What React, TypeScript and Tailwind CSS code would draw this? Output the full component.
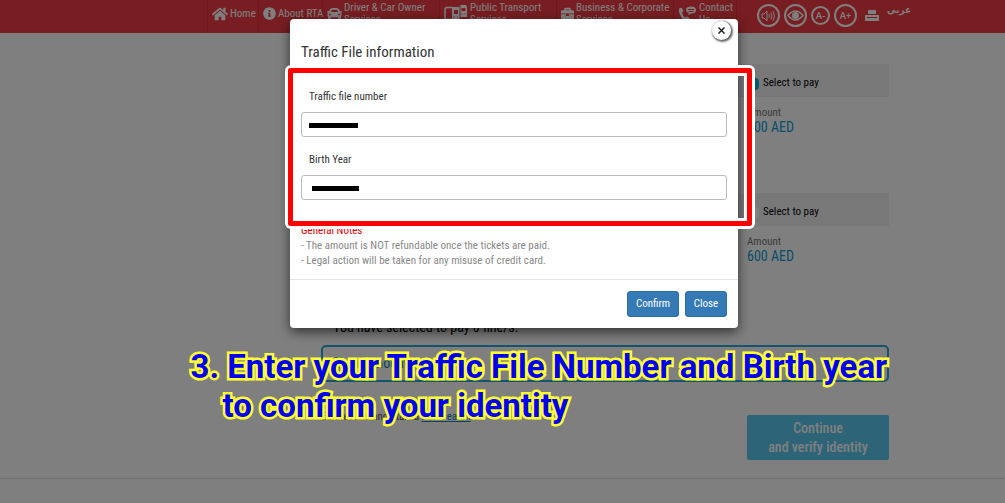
import { ReactNode } from "react";
import { FaBriefcase, FaCar, FaHome, FaInfoCircle } from "react-icons/fa";

type NavItem = {
  label: string;
  icon: ReactNode;
  width: string;
};

const navItems: NavItem[] = [
  { label: "Home", icon: <FaHome size={16} />, width: "w-[51px]" },
  { label: "About\u00a0RTA", icon: <FaInfoCircle size={13} />, width: "w-[64px]" },
  { label: "Driver & Car Owner Services", icon: <FaCar size={15} />, width: "w-[117px]" },
  { label: "Public Transport Services", icon: <TransportIcon />, width: "w-[117px]" },
  { label: "Business & Corporate Services", icon: <FaBriefcase size={13} />, width: "w-[117px]" },
  { label: "Contact Us", icon: <ContactIcon />, width: "w-[63px]" },
];

const fines = [
  { id: "fine-1", amount: "500 AED", selected: true },
  { id: "fine-2", amount: "600 AED", selected: false },
];

function TransportIcon() {
  return (
    <svg width="24" height="19" viewBox="0 0 24 19" fill="none" stroke="currentColor">
      <path d="M9 3.500H3Q1 3.500 1 5.500v8q0 2 2 2h4q2 0 2-2" strokeWidth="1.500" />
      <path d="M3 16l-1 2M8 16l1 2" />
      <path
        d="M8 5q0-2 2-2h4q2 0 2 2v11H8zM15 3q0-2 2-2h4q2 0 2 2v10h-8z"
        fill="currentColor"
        stroke="none"
      />
      <path d="M10 6h4v4h-4zM17.500 4h4v3h-4z" fill="#f03c44" stroke="none" />
      <path d="M9.500 13h1M13 13h1M17.500 10h1M20.500 10h1M16 1v15" stroke="#f03c44" />
    </svg>
  );
}

function ContactIcon() {
  return (
    <svg width="19" height="16" viewBox="0 0 19 16" fill="currentColor">
      <path d="M1 3q1-2 3-1l1.500 3-1.500 1.500q.5 3 3 5L9 10.500l3 2q.5 1.500-1.500 2.500-4 1-7-3.500T1 3z" />
      <path d="M8 4q0-3.500 5-3.500T18 4t-5 3.500L10.500 9V7Q8 6 8 4z" />
      <path d="M10 3.500h6M10.500 5.500h5" stroke="#f03c44" />
    </svg>
  );
}

function ToolButton({ label, small, children }: { label: string; small?: boolean; children: ReactNode }) {
  return (
    <button
      aria-label={label}
      className={`flex items-center justify-center rounded-full border-2 border-white text-[9px] font-bold ${
        small ? "size-[19px]" : "size-[23px]"
      }`}
    >
      {children}
    </button>
  );
}

function Header() {
  return (
    <header className="h-[33px] bg-[#f03c44] text-white">
      <div className="mx-auto flex h-full max-w-[773px] pl-[91px]">
        <nav className="flex h-full shrink-0 border-l border-[#d8323a]">
          {navItems.map((item) => (
            <a
              key={item.label}
              href="#"
              className={`flex h-full items-start gap-[2px] border-r border-[#d8323a] pl-1 text-[11px] leading-3 ${item.width}`}
            >
              <span className="flex h-[27px] shrink-0 items-center">{item.icon}</span>
              <span className="flex min-h-[27px] items-center">{item.label}</span>
            </a>
          ))}
        </nav>
        <div className="ml-5 flex h-[31px] shrink-0 items-center gap-1 font-[Lato,sans-serif]">
          <ToolButton label="Listen">
            <svg width="15" height="12" viewBox="0 0 15 12" fill="none" stroke="currentColor">
              <path d="M1 4h2l3-3v10L3 8H1z" />
              <path d="M8 4q1 2 0 4M10 2.500q2 3.500 0 7M12 1q3 5 0 10" />
            </svg>
          </ToolButton>
          <ToolButton label="Contrast">
            <svg width="17" height="11" viewBox="0 0 17 11">
              <path d="M1 5.500q7.500-9 15 0-7.500 9-15 0z" fill="none" stroke="currentColor" strokeWidth="1.500" />
              <circle cx="8.500" cy="5.500" r="3.500" fill="currentColor" />
            </svg>
          </ToolButton>
          <ToolButton label="Decrease text size" small>
            A-
          </ToolButton>
          <ToolButton label="Increase text size">A+</ToolButton>
          <button aria-label="Print" className="ml-1">
            <svg width="14" height="11" viewBox="0 0 14 11" fill="currentColor">
              <path d="M3 0h8v4H3zM0 5h14v6H0z" />
              <path d="M2 7.500h10" stroke="#f03c44" />
            </svg>
          </button>
          <a href="#" lang="ar" className="mb-3 ml-1 font-['DejaVu_Sans',sans-serif] text-[9px] leading-3 font-bold">
            عربي
          </a>
        </div>
      </div>
    </header>
  );
}

function FineRow({ id, amount, selected }: { id: string; amount: string; selected: boolean }) {
  return (
    <section className="h-[129px]">
      <div className="flex h-[33px] items-center justify-end bg-[#f0f0f0] pt-[6px]">
        <div className="flex w-[142px] items-center gap-1 text-[11px] text-black">
          <input
            id={id}
            type="checkbox"
            defaultChecked={selected}
            className="size-3 appearance-none rounded-sm bg-white checked:bg-[#10a8e0]"
          />
          <label htmlFor={id}>Select to pay</label>
        </div>
      </div>
      <div className="ml-auto w-[142px] pt-2">
        <p className="text-[11px] leading-[15px] text-[#777]">Amount</p>
        <p className="text-sm leading-[15px] text-[#0c9cd2]">{amount}</p>
      </div>
    </section>
  );
}

function Field({ id, label, mask }: { id: string; label: string; mask: string }) {
  return (
    <div className="relative">
      <label htmlFor={id} className="block h-[38px] pt-[15px] pl-2 text-[11px] leading-4 text-[#333]">
        {label}
      </label>
      <input id={id} className="block h-[25px] w-full rounded-[3px] border border-[#bbb] bg-white px-2" />
      <span className={`absolute bottom-[9px] h-[5px] bg-black ${mask}`} />
    </div>
  );
}

function TrafficFileDialog() {
  return (
    <div
      role="dialog"
      aria-labelledby="dialog-title"
      className="relative w-[448px] rounded-[4px] bg-white shadow-[0_4px_12px_rgba(0,0,0,0.6)]"
    >
      <button
        aria-label="Dismiss"
        className="absolute top-[2px] right-[7px] flex size-[19px] items-center justify-center rounded-full bg-white shadow-[1px_1px_2px_1px_rgba(0,0,0,0.6)]"
      >
        <svg width="7" height="7" viewBox="0 0 7 7" stroke="#222" strokeWidth="1.5">
          <path d="M0.500 0.500l6 6M6.500 0.500l-6 6" />
        </svg>
      </button>
      <h2 id="dialog-title" className="h-[55px] px-[11px] pt-[23px] text-[15px] leading-5 text-[#333]">
        Traffic File information
      </h2>
      <div className="px-[11px]">
        <Field id="traffic-file" label="Traffic file number" mask="left-2 w-[49px]" />
        <Field id="birth-year" label="Birth Year" mask="left-[11px] w-[47px]" />
      </div>
      <div className="px-[11px] pt-[23px] pb-[11px] text-[11px] leading-[15px] text-[#888]">
        <p className="text-[#e00000]">General Notes</p>
        <p>- The amount is NOT refundable once the tickets are paid.</p>
        <p>- Legal action will be taken for any misuse of credit card.</p>
      </div>
      <div className="flex justify-end gap-[6px] border-t border-[#e5e5e5] px-[11px] pt-[11px] pb-[11px] text-[11px] text-white">
        <button className="h-[26px] w-[52px] rounded-[3px] border border-[#2e6da4] bg-[#337ab7]">Confirm</button>
        <button className="h-[26px] w-[42px] rounded-[3px] border border-[#2e6da4] bg-[#337ab7]">Close</button>
      </div>
      <div className="pointer-events-none absolute top-[49px] -right-[14px] -left-[2px] h-[158px] rounded-[3px] border-[5px] border-[#f00] shadow-[0_0_0_3px_#fff,inset_0_0_0_3px_#fff]" />
    </div>
  );
}

export default function App() {
  return (
    <div className="relative min-h-screen overflow-hidden bg-white font-['Roboto_Condensed','Open_Sans_Condensed',Lato,sans-serif]">
      <Header />
      <main className="mx-auto max-w-[773px] pt-[31px] pl-[205px]">
        {fines.map((fine) => (
          <FineRow key={fine.id} {...fine} />
        ))}
        <p className="h-[23px] text-sm leading-[10px] text-black">
          <span className="pl-3">You have selected to pay 0 fine/s:</span>
        </p>
        <div className="h-[37px] rounded-[5px] border-2 border-[#2ba8d8] px-3 text-sm leading-8 text-[#1683b0]">
          Total amount
        </div>
        <div className="mt-[29px] flex items-start justify-between">
          <p className="text-[11px] leading-3 text-[#555]">
            Edit results and start a{" "}
            <a href="#" className="text-[#1683b0] underline">
              new search
            </a>
          </p>
          <button className="mt-1 h-[45px] w-[142px] rounded-[2px] bg-[#5bc8f0] pt-px text-sm leading-[19px] font-medium text-white">
            Continue
            <br />
            and verify identity
          </button>
        </div>
      </main>
      <hr className="mt-[18px] border-[#ddd]" />

      <div className="absolute inset-0 bg-black/50" />
      <div className="absolute inset-x-0 top-[19px] flex justify-center pl-[23px]">
        <TrafficFileDialog />
      </div>
      <div className="absolute inset-x-0 top-[347px] flex justify-center pl-[76px]">
        <p className="w-[700px] font-[Roboto,sans-serif] text-[33px] leading-[39px] font-bold whitespace-nowrap text-[#0000f0] [paint-order:stroke_fill] [-webkit-text-stroke:5px_#ffff33]">
          3. Enter your Traffic File Number and Birth year
          <br />
          <span className="pl-8">to confirm your identity</span>
        </p>
      </div>
    </div>
  );
}
